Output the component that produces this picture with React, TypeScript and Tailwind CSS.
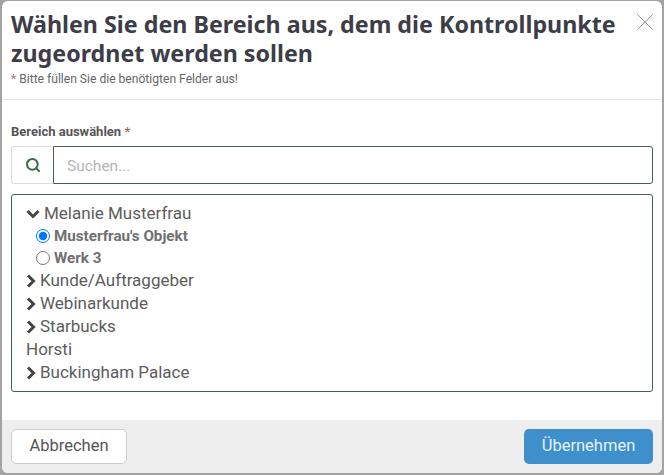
import { Search, X } from 'lucide-react';

function TreeRow({ label, open }: { label: string; open?: boolean }) {
	return (
		<div className="flex items-center h-[23px] text-[17px] text-[#5c5c5c]">
			{open ? (
				<svg width="14" height="10" viewBox="0 0 14 10" fill="none" stroke="#444444" strokeWidth="3" className="mr-[4px] mt-[1px]">
					<path d="M1.5 2l5.5 5.5 5.5-5.5" />
				</svg>
			) : (
				<svg width="10" height="14" viewBox="0 0 10 14" fill="none" stroke="#444444" strokeWidth="3" className="mr-[4px]">
					<path d="M2 1.5l5.5 5.5-5.5 5.5" />
				</svg>
			)}
			<span>{label}</span>
		</div>
	);
}

function RadioRow({ label, checked }: { label: string; checked?: boolean }) {
	return (
		<div className="flex items-center h-[22px] pl-[10px] text-[15.2px] font-bold text-[#707070]">
			<input type="radio" name="area" defaultChecked={checked} className="w-[14px] h-[14px] m-0 mr-[4px] accent-[#0075ff]" />
			<span>{label}</span>
		</div>
	);
}

export default function App() {
	return (
		<div className="w-[664px] h-[475px] bg-[#a3a3a3] pt-[1px] px-[2px] overflow-hidden font-['Roboto',sans-serif]">
			<div className="relative w-[660px] h-[472px] bg-white rounded-[6px] overflow-hidden flex flex-col">
				{/* Header */}
				<div className="h-[99px] border-b border-[#e5e5e5] pl-[9px] pt-[9px]">
					<h1 className="font-['Noto_Sans',sans-serif] font-bold text-[23.25px] leading-[29px] text-[#3d3d47] w-[625px]">
						Wählen Sie den Bereich aus, dem die Kontrollpunkte zugeordnet werden sollen
					</h1>
					<p className="text-[12.1px] leading-[16px] mt-[3px] text-[#666666]">
						<span className="text-[#b07a78]">*</span> Bitte füllen Sie die benötigten Felder aus!
					</p>
				</div>

				<button className="absolute top-[6px] right-[2px] text-[#999999]">
					<X className="w-[30px] h-[30px]" strokeWidth={0.8} />
				</button>

				{/* Body */}
				<div className="flex-1 px-[9px] pt-[25px]">
					<label className="block text-[13px] leading-[14px] font-bold text-[#555555] mb-[7px]">
						Bereich auswählen <span className="text-[#a56a68]">*</span>
					</label>
					<div className="flex h-[38px] mb-[10px]">
						<div className="w-[42px] flex items-center justify-center border border-r-0 border-[#dddddd] rounded-l-[3px]">
							<Search className="w-[16px] h-[16px] text-[#3c6b47]" strokeWidth={3} />
						</div>
						<input
							placeholder="Suchen..."
							className="flex-1 min-w-0 border border-[#40654a] rounded-r-[3px] px-[13px] pt-[3px] text-[15.5px] text-[#555555] placeholder:text-[#b5b5b5] outline-none"
						/>
					</div>
					<div className="h-[198px] border border-[#40654a] rounded-[3px] pl-[14px] pt-[7px]">
						<TreeRow label="Melanie Musterfrau" open />
						<RadioRow label="Musterfrau's Objekt" checked />
						<RadioRow label="Werk 3" />
						<TreeRow label="Kunde/Auftraggeber" />
						<TreeRow label="Webinarkunde" />
						<TreeRow label="Starbucks" />
						<div className="h-[23px] flex items-center text-[17px] text-[#5c5c5c]">Horsti</div>
						<TreeRow label="Buckingham Palace" />
					</div>
				</div>

				{/* Footer */}
				<div className="h-[53px] bg-[#eeeeee] flex items-center justify-between px-[9px]">
					<button className="w-[116px] h-[35px] bg-white border border-[#cccccc] rounded-[5px] text-[16.5px] text-[#555555]">
						Abbrechen
					</button>
					<button className="w-[129px] h-[35px] bg-[#3f8fcc] rounded-[5px] text-[16.5px] text-[#e6f3fb]">
						Übernehmen
					</button>
				</div>
			</div>
		</div>
	);
}
